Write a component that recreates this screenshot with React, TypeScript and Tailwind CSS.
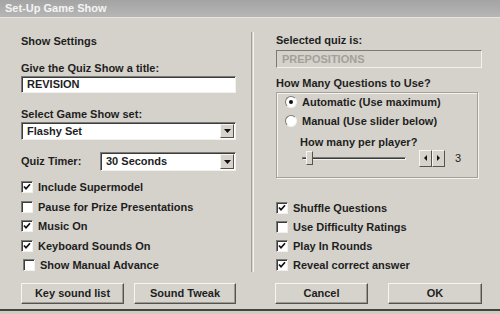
import React from 'react';

function CheckBox({ checked }: { checked: boolean }) {
  return (
    <span className="flex h-[12px] w-[12px] shrink-0 items-center justify-center border border-t-[#7c7a76] border-l-[#7c7a76] border-b-[#f2f1ee] border-r-[#f2f1ee] bg-white shadow-[inset_1px_1px_0_#3c3c3c]">
      {checked && (
        <svg width="8" height="8" viewBox="0 0 8 8">
          <path d="M1 3.5 L3 5.8 L7 1.2" fill="none" stroke="#111" strokeWidth="1.7" />
        </svg>
      )}
    </span>
  );
}

function CheckRow({ label, checked, h }: { label: string; checked: boolean; h: string }) {
  return (
    <div className={`flex items-center gap-[5px] ${h}`}>
      <CheckBox checked={checked} />
      <span>{label}</span>
    </div>
  );
}

function Radio({ selected }: { selected: boolean }) {
  return (
    <span className="flex h-[12px] w-[12px] shrink-0 items-center justify-center rounded-full border border-t-[#7c7a76] border-l-[#7c7a76] border-b-[#f4f3f0] border-r-[#f4f3f0] bg-white">
      {selected && <span className="h-[4px] w-[4px] rounded-full bg-[#111]" />}
    </span>
  );
}

function Button({ label, w }: { label: string; w: string }) {
  return (
    <button
      className={`${w} h-[21px] border border-t-[#f6f5f2] border-l-[#f6f5f2] border-b-[#55534f] border-r-[#55534f] bg-[#d6d3cc] text-center text-[11px] font-bold text-[#1e1e1e] shadow-[inset_-1px_-1px_0_#9c9992]`}
    >
      {label}
    </button>
  );
}

function Dropdown({ value, w, h }: { value: string; w: string; h: string }) {
  return (
    <div
      className={`${w} ${h} flex items-stretch border border-t-[#7c7a76] border-l-[#7c7a76] border-b-[#f2f1ee] border-r-[#f2f1ee] bg-white shadow-[inset_1px_1px_0_#3c3c3c]`}
    >
      <span className="flex flex-1 items-center pl-[5px]">{value}</span>
      <span className="m-[1px] flex w-[14px] items-center justify-center border border-t-[#f6f5f2] border-l-[#f6f5f2] border-b-[#55534f] border-r-[#55534f] bg-[#d6d3cc]">
        <svg width="7" height="4" viewBox="0 0 7 4">
          <path d="M0 0 H7 L3.5 4 Z" fill="#111" />
        </svg>
      </span>
    </div>
  );
}

export default function App() {
  return (
    <div className="flex h-[314px] w-[500px] flex-col overflow-hidden bg-[#d5d2cb] font-['Liberation_Sans',Arial,sans-serif] text-[11px] font-bold text-[#1e1e1e]">
      <div className="h-[17px] bg-gradient-to-b from-[#a4a4a4] to-[#b6b6b6] pl-[5px] text-[11px] leading-[17px] text-[#f4f4f4]">
        Set-Up Game Show
      </div>
      <div className="h-[1px] bg-[#e6e4df]" />

      <div className="flex flex-1 pl-[21px]">
        {/* left column */}
        <div className="flex w-[215px] flex-col">
          <div className="mt-[16px] h-[14px] leading-[14px]">Show Settings</div>
          <div className="mt-[13px] h-[14px] leading-[14px]">Give the Quiz Show a title:</div>
          <div className="mt-[1px] flex h-[17px] items-center border border-t-[#7c7a76] border-l-[#7c7a76] border-b-[#f2f1ee] border-r-[#f2f1ee] bg-white pl-[5px] shadow-[inset_1px_1px_0_#3c3c3c]">
            REVISION
          </div>
          <div className="mt-[14px] h-[14px] leading-[14px]">Select Game Show set:</div>
          <div className="mt-[1px]">
            <Dropdown value="Flashy Set" w="w-[215px]" h="h-[18px]" />
          </div>
          <div className="mt-[12px] flex h-[19px] items-center">
            <span className="w-[79px]">Quiz Timer:</span>
            <Dropdown value="30 Seconds" w="w-[136px]" h="h-[19px]" />
          </div>
          <div className="mt-[6.5px] flex flex-col">
            <CheckRow label="Include Supermodel" checked h="h-[19.5px]" />
            <CheckRow label="Pause for Prize Presentations" checked={false} h="h-[19.5px]" />
            <CheckRow label="Music On" checked h="h-[19.5px]" />
            <CheckRow label="Keyboard Sounds On" checked h="h-[19.5px]" />
            <div className="ml-[2px]">
              <CheckRow label="Show Manual Advance" checked={false} h="h-[19.5px]" />
            </div>
          </div>
          <div className="mt-[8px] flex gap-[10px]">
            <Button label="Key sound list" w="w-[103px]" />
            <Button label="Sound Tweak" w="w-[102px]" />
          </div>
        </div>

        {/* divider */}
        <div className="ml-[15px] mt-[14px] h-[240px] w-[3px] border-l border-r border-l-[#a4a19a] border-r-[#f4f3f0]" />

        {/* right column */}
        <div className="ml-[22px] flex w-[206px] flex-col">
          <div className="mt-[15px] h-[14px] leading-[14px]">Selected quiz is:</div>
          <div className="mt-[3px] flex h-[18px] items-center border border-t-[#7c7a76] border-l-[#7c7a76] border-b-[#f2f1ee] border-r-[#f2f1ee] bg-[#d5d2cb] pl-[5px] text-[#a3a09a]">
            PREPOSITIONS
          </div>
          <div className="mt-[8px] h-[14px] leading-[14px]">How Many Questions to Use?</div>
          <div className="mt-[2px] flex h-[86px] w-[202px] flex-col border border-[#a4a19a] shadow-[inset_1px_1px_0_#f4f3f0,1px_1px_0_#f4f3f0]">
            <div className="flex h-[18px] items-center gap-[5px] pl-[8px]">
              <Radio selected />
              <span>Automatic (Use maximum)</span>
            </div>
            <div className="flex h-[20px] items-center gap-[5px] pl-[8px]">
              <Radio selected={false} />
              <span>Manual (Use slider below)</span>
            </div>
            <div className="mt-[4px] h-[14px] pl-[23px] leading-[14px]">How many per player?</div>
            <div className="flex h-[18px] items-center pl-[25px]">
              <div className="relative h-[14px] w-[104px]">
                <div className="absolute left-0 right-0 top-[6px] h-[3px] border border-t-[#7c7a76] border-l-[#7c7a76] border-b-[#f4f3f0] border-r-[#f4f3f0] bg-[#3c3c3c]" />
                <div className="absolute left-[4px] top-0 h-[14px] w-[7px] border border-t-[#f6f5f2] border-l-[#f6f5f2] border-b-[#55534f] border-r-[#55534f] bg-[#d6d3cc]" />
              </div>
              <div className="ml-[13px] flex">
                <span className="flex h-[17px] w-[13px] items-center justify-center border border-t-[#f6f5f2] border-l-[#f6f5f2] border-b-[#55534f] border-r-[#55534f] bg-[#d6d3cc]">
                  <svg width="3" height="6" viewBox="0 0 3 6">
                    <path d="M3 0 V6 L0 3 Z" fill="#111" />
                  </svg>
                </span>
                <span className="flex h-[17px] w-[13px] items-center justify-center border border-t-[#f6f5f2] border-l-[#f6f5f2] border-b-[#55534f] border-r-[#55534f] bg-[#d6d3cc]">
                  <svg width="3" height="6" viewBox="0 0 3 6">
                    <path d="M0 0 V6 L3 3 Z" fill="#111" />
                  </svg>
                </span>
              </div>
              <span className="ml-[10px] font-normal">3</span>
            </div>
          </div>
          <div className="mt-[20.5px] flex flex-col">
            <CheckRow label="Shuffle Questions" checked h="h-[19px]" />
            <CheckRow label="Use Difficulty Ratings" checked={false} h="h-[19px]" />
            <CheckRow label="Play In Rounds" checked h="h-[19px]" />
            <CheckRow label="Reveal correct answer" checked h="h-[19px]" />
          </div>
          <div className="-ml-[1px] mt-[8.5px] flex gap-[20px]">
            <Button label="Cancel" w="w-[93px]" />
            <Button label="OK" w="w-[94px]" />
          </div>
        </div>
      </div>

      <div className="h-[5px] border-t-2 border-t-[#45433f] bg-[#cfccc5]" />
    </div>
  );
}
